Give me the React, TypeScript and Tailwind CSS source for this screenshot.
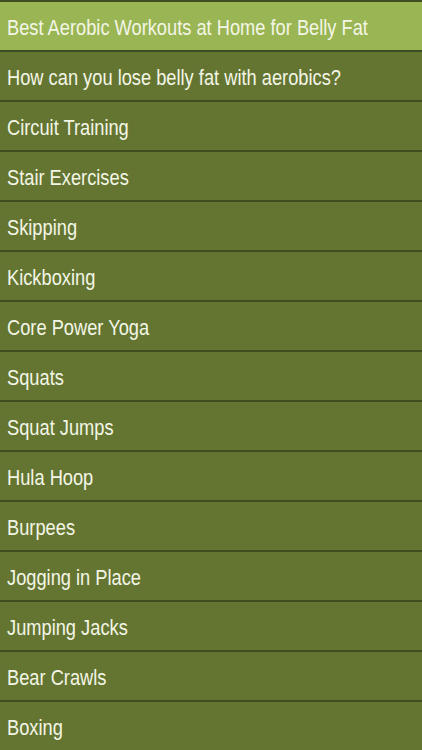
const ITEMS = [
  "Best Aerobic Workouts at Home for Belly Fat",
  "How can you lose belly fat with aerobics?",
  "Circuit Training",
  "Stair Exercises",
  "Skipping",
  "Kickboxing",
  "Core Power Yoga",
  "Squats",
  "Squat Jumps",
  "Hula Hoop",
  "Burpees",
  "Jogging in Place",
  "Jumping Jacks",
  "Bear Crawls",
  "Boxing",
];

export default function App() {
  return (
    <div className="w-[422px] h-[750px] overflow-hidden bg-[#647532] font-['Liberation_Sans',Arial,sans-serif]">
      {ITEMS.map((item, i) => (
        <div
          key={item}
          className={
            i === 0
              ? "h-[50px] border-t-2 border-[#3f4e22] bg-[#9ab553] flex items-center pl-[7px] pt-[3px] text-[22px] leading-none text-[#f3f5e6]"
              : "h-[50px] border-t-2 border-[#3f4e22] bg-[#647532] flex items-center pl-[7px] pt-[3px] text-[22px] leading-none text-[#f3f5e6]"
          }
        >
          <span className="inline-block whitespace-nowrap origin-left scale-x-[0.83]">{item}</span>
        </div>
      ))}
    </div>
  );
}
